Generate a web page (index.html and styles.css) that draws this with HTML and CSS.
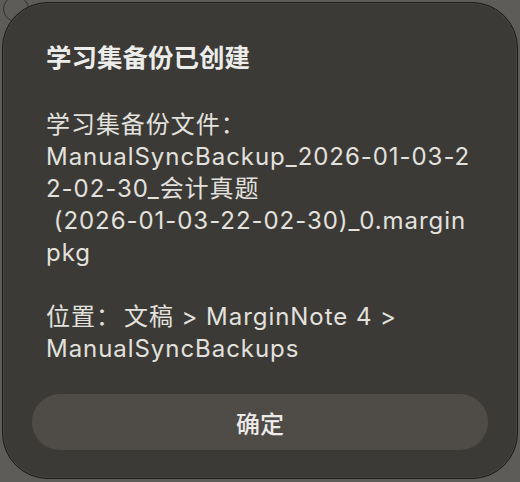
FILE: index.html
```html
<!DOCTYPE html>
<html lang="zh-CN">
<head>
<meta charset="utf-8">
<link rel="stylesheet" href="styles.css">
</head>
<body>
<div class="backdrop-ring"></div>
<div class="alert">
  <div class="alert-text">
    <h1 class="alert-title">学习集备份已创建</h1>
    <p class="alert-body">学习集备份文件：<br>ManualSyncBackup_2026-01-03-2<br>2-02-30_会计真题<br> (2026-01-03-22-02-30)_0.margin<br>pkg<br><br>位置：&#8202;文稿 &gt; MarginNote 4 &gt;<br>ManualSyncBackups</p>
  </div>
  <button class="alert-button">确定</button>
</div>
</body>
</html>
```

FILE: styles.css
```css
html, body {
  margin: 0;
  padding: 0;
}
body {
  width: 520px;
  height: 482px;
  background: #5e5c58;
  padding: 2px 2px 0 2px;
  box-sizing: border-box;
  position: relative;
  overflow: hidden;
  font-family: "Inter", "Noto Sans CJK SC", sans-serif;
}
.backdrop-ring {
  position: absolute;
  left: 3px;
  top: -4px;
  width: 24px;
  height: 24px;
  border: 1.5px solid #34322f;
  border-radius: 50%;
}
.alert {
  position: relative;
  width: 516px;
  height: 477px;
  box-sizing: border-box;
  background: #3c3a36;
  border: 1px solid #1c1b19;
  border-radius: 46px;
  box-shadow: inset 0 0 0 1px rgba(255,255,255,0.06);
  display: flex;
  flex-direction: column;
  justify-content: space-between;
  padding: 0 29px 28px 29px;
}
.alert-text {
  padding: 36px 14px 0 14px;
}
.alert-title {
  margin: 0;
  font-size: 25.5px;
  line-height: 38px;
  font-weight: 700;
  color: #ececea;
}
.alert-body {
  margin: 32px 0 0 0;
  font-size: 24px;
  line-height: 32px;
  letter-spacing: 0.95px;
  color: #e2e1de;
  white-space: pre;
}
.alert-button {
  height: 56px;
  border: none;
  border-radius: 28px;
  background: #4f4c48;
  color: #ebeae8;
  font-family: "Inter", "Noto Sans CJK SC", sans-serif;
  font-size: 24px;
  font-weight: 500;
  padding: 0;
}
```
